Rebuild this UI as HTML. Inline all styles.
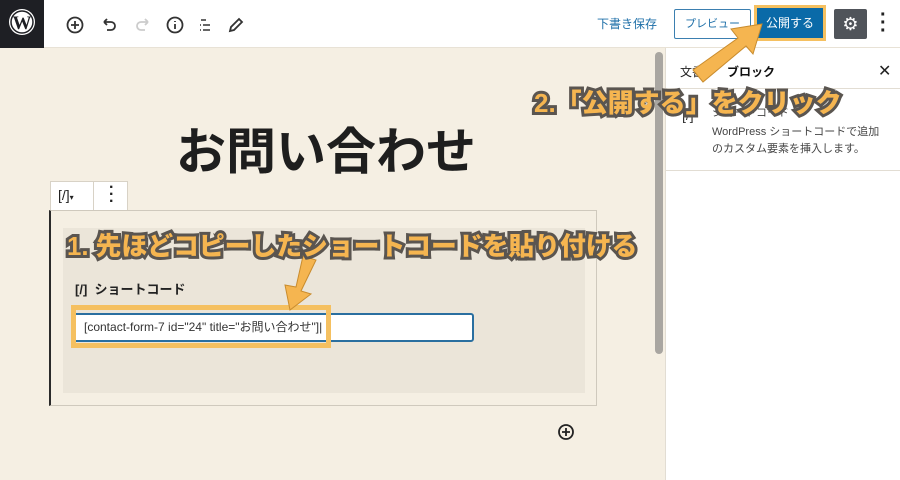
<!DOCTYPE html>
<html><head><meta charset="utf-8"><style>
*{margin:0;padding:0;box-sizing:border-box}
body{width:900px;height:480px;overflow:hidden;background:#f5efe3;font-family:"Liberation Sans","Noto Sans CJK JP",sans-serif;position:relative}
.a{position:absolute}
.ann{position:absolute;font-weight:900;color:#f5b550;-webkit-text-stroke:6px #5a5550;paint-order:stroke fill;white-space:nowrap;letter-spacing:0px}
</style></head><body>
<div class="a" style="left:0;top:0;width:900px;height:48px;background:#fff;border-bottom:1px solid #e8e2d6"></div>
<div class="a" style="left:0;top:0;width:44px;height:48px;background:#1e1f24"></div>
<svg class="a" style="left:8px;top:8px" width="28" height="28" viewBox="0 0 28 28"><circle cx="14" cy="14" r="13" fill="#fff"/><circle cx="14" cy="14" r="11" fill="none" stroke="#1e1f24" stroke-width="1.5"/><text x="14" y="21" text-anchor="middle" font-family="Liberation Serif" font-weight="bold" font-size="19" fill="#1e1f24">W</text></svg>
<svg class="a" style="left:64px;top:14px" width="190" height="22" viewBox="0 0 190 22" fill="none" stroke="#333" stroke-width="1.8">
<circle cx="11" cy="11" r="7.5"/><path d="M11 7v8M7 11h8"/>
<path d="M40 8h7a4 4 0 010 8h-4M40 8l3-3M40 8l3 3"/>
<path stroke="#ccc" d="M84 8h-7a4 4 0 000 8h4M84 8l-3-3M84 8l-3 3"/>
<circle cx="111" cy="11" r="7.5"/><path d="M111 10v5M111 7v1"/>
<path stroke-width="1.4" d="M137 6h5M139 11h7M139 16h7M136 11h1M136 16h1"/>
<path d="M166 17l1-4 8-8 3 3-8 8z"/>
</svg>
<div class="a" style="left:597px;top:15px;font-size:12px;color:#1e6fa8">下書き保存</div>
<div class="a" style="left:674px;top:9px;width:77px;height:30px;border:1px solid #3b7fb0;background:#fff;color:#1e6fa8;font-size:11px;text-align:center;line-height:28px;border-radius:2px">プレビュー</div>
<div class="a" style="left:754px;top:5px;width:72px;height:36px;background:#f5c060"></div>
<div class="a" style="left:757px;top:8px;width:66px;height:30px;background:#0a6aa8;color:#fff;font-size:12px;text-align:center;line-height:30px">公開する</div>
<div class="a" style="left:834px;top:9px;width:33px;height:30px;background:#50545a;border-radius:2px;color:#fff;font-size:18px;text-align:center;line-height:30px">⚙</div>
<div class="a" style="left:880px;top:11px;font-size:20px;color:#222;line-height:8px;font-weight:bold">·<br>·<br>·</div>
<div class="a" style="left:655px;top:52px;width:8px;height:302px;background:#a9a6a1;border-radius:4px"></div>
<div class="a" style="left:665px;top:48px;width:235px;height:432px;background:#fff;border-left:1px solid #e2ddd3"></div>
<div class="a" style="left:665px;top:88px;width:235px;height:1px;background:#e2ddd3"></div>
<div class="a" style="left:680px;top:63px;font-size:12px;color:#222">文書</div>
<div class="a" style="left:727px;top:63px;font-size:12px;color:#111;font-weight:bold">ブロック</div>
<div class="a" style="left:878px;top:61px;font-size:16px;color:#222">✕</div>
<div class="a" style="left:665px;top:170px;width:235px;height:1px;background:#e2ddd3"></div>
<div class="a" style="left:682px;top:107px;font-size:14px;color:#333">[/]</div>
<div class="a" style="left:712px;top:104px;font-size:11px;color:#444">ショートコード</div>
<div class="a" style="left:712px;top:124px;font-size:11px;color:#444;line-height:17px">WordPress ショートコードで追加<br>のカスタム要素を挿入します。</div>
<div class="a" style="left:0;top:112px;width:652px;text-align:center;font-size:50px;font-weight:bold;color:#1e1e1e">お問い合わせ</div>
<div class="a" style="left:50px;top:181px;width:78px;height:30px;background:#fff;border:1px solid #d8d2c6"></div>
<div class="a" style="left:93px;top:181px;width:1px;height:30px;background:#d8d2c6"></div>
<div class="a" style="left:58px;top:187px;font-size:14px;color:#222">[/]<span style="font-size:8px">▾</span></div>
<div class="a" style="left:109px;top:184px;font-size:16px;color:#222;line-height:7px;font-weight:bold">·<br>·<br>·</div>
<div class="a" style="left:49px;top:210px;width:548px;height:196px;border:1px solid #cfc9bd;border-left:2px solid #2a2a2a"></div>
<div class="a" style="left:63px;top:228px;width:522px;height:165px;background:#ebe5d9"></div>
<div class="a" style="left:75px;top:279px;font-size:13px;font-weight:bold;color:#222">[/]&nbsp; ショートコード</div>
<div class="a" style="left:73px;top:313px;width:401px;height:29px;background:#fff;border:2px solid #2a6fa0;border-radius:3px;font-size:12px;color:#333;line-height:25px;padding-left:9px">[contact-form-7 id="24" title="お問い合わせ"]|</div>
<div class="a" style="left:71px;top:305px;width:260px;height:43px;border:5px solid #f5c060"></div>
<svg class="a" style="left:566px;top:432px;transform:translate(-10px,-10px)" width="20" height="20"><circle cx="10" cy="10" r="7" fill="none" stroke="#222" stroke-width="1.8"/><path d="M10 6v8M6 10h8" stroke="#222" stroke-width="1.8"/></svg>
<svg class="a" style="left:0;top:0" width="900" height="480">
<path d="M693 70L738 38L731 29L762 24L753 54L746 46L703 82Z" fill="#f5b550" stroke="#c98c2e" stroke-width="1"/>
<path d="M303 256L296 287L285 285L290 310L311 294L301 291L316 260Z" fill="#f5b550" stroke="#c98c2e" stroke-width="1"/>
</svg>
<div class="ann" style="left:534px;top:83px;font-size:26px">2.「公開する」をクリック</div>
<div class="ann" style="left:67px;top:226px;font-size:25.8px">1. 先ほどコピーしたショートコードを貼り付ける</div>
</body></html>
